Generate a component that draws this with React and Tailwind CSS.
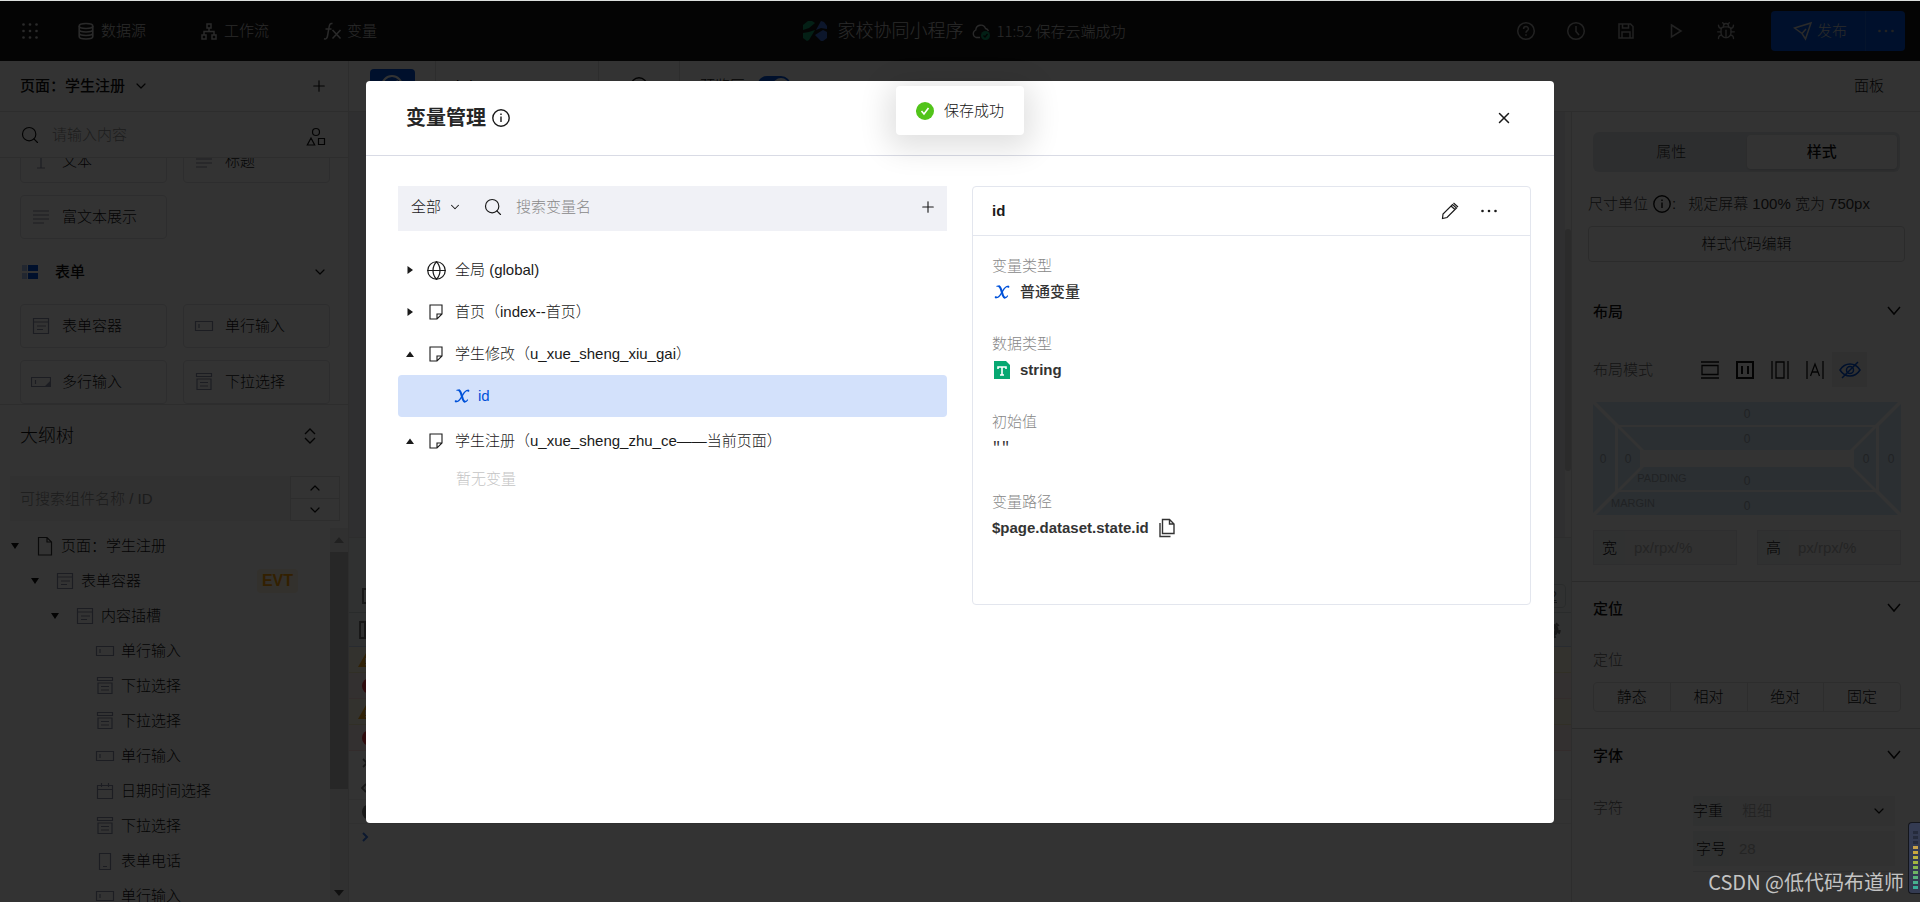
import React, { useState } from 'react';
import { Bug, ChevronDown, ChevronUp, Globe, Plus, Search, X } from 'lucide-react';

const PALETTE_TEXT = [
  { icon: 'text', label: '文本' },
  { icon: 'lines', label: '标题' },
  { icon: 'lines', label: '富文本展示' },
];

const PALETTE_FORM = [
  { icon: 'form', label: '表单容器' },
  { icon: 'input', label: '单行输入' },
  { icon: 'textarea', label: '多行输入' },
  { icon: 'select', label: '下拉选择' },
];

const OUTLINE = [
  { icon: 'page', label: '页面：学生注册', pad: 'pl-[10px]', open: true },
  { icon: 'form', label: '表单容器', pad: 'pl-[30px]', open: true, tag: 'EVT' },
  { icon: 'form', label: '内容插槽', pad: 'pl-[50px]', open: true },
  { icon: 'input', label: '单行输入', pad: 'pl-[70px]' },
  { icon: 'select', label: '下拉选择', pad: 'pl-[70px]' },
  { icon: 'select', label: '下拉选择', pad: 'pl-[70px]' },
  { icon: 'input', label: '单行输入', pad: 'pl-[70px]' },
  { icon: 'date', label: '日期时间选择', pad: 'pl-[70px]' },
  { icon: 'select', label: '下拉选择', pad: 'pl-[70px]' },
  { icon: 'phone', label: '表单电话', pad: 'pl-[70px]' },
  { icon: 'input', label: '单行输入', pad: 'pl-[70px]' },
];

// Component glyphs, all on a 20x20 box.
const GLYPHS = {
  text: <path d="M3 3h14M10 3v14M6 17h8" />,
  lines: <path d="M2 4h16M2 8h16M2 12h16M2 16h11" />,
  form: <path d="M2.5 2.5h15v15h-15zM2.5 6h15M6 10h9M6 13.500h6" />,
  input: <path d="M1.500 5.500h17v9h-17zM5 8v4" />,
  textarea: <><path d="M.5 5.500h19v9H.5zM4.500 8v4" /><path d="M19 10v4h-4z" fill="currentColor" /></>,
  select: <path d="M2.500 1.500h15v3h-15zM3 7h14v10.500H3zM6 10.500h8M6 14h8" />,
  date: <path d="M2.500 4.500h15v13h-15zM2.500 8.500h15M6.500 2v4M13.500 2v4" />,
  phone: <path d="M4.500 2.500h11v16h-11zM8 15.500h4" />,
  page: <path d="M3.500 1.500h8.500l4.500 4.500v13h-13zM12 1.500V6h4.500" />,
};

const Glyph = ({ name, className = 'text-[#8b90a8]' }) => (
  <svg viewBox="0 0 20 20" fill="none" stroke="currentColor" strokeWidth="1.2" className={`w-5 h-5 shrink-0 ${className}`}>
    {GLYPHS[name]}
  </svg>
);

const InfoIcon = ({ className = '' }) => (
  <svg viewBox="0 0 20 20" fill="none" stroke="currentColor" strokeWidth="1.4" className={`w-5 h-5 shrink-0 ${className}`}>
    <circle cx="10" cy="10" r="8.2" />
    <path d="M10 8.500v5.500M10 5.500v1.600" />
  </svg>
);

const VariableIcon = () => (
  <svg viewBox="0 0 16 16" fill="none" stroke="#0052d9" strokeLinecap="round" className="w-4 h-4 shrink-0">
    <path d="M5.300 2.400C7.800 3.500 7.800 12.500 10.600 13.600" strokeWidth="2.200" />
    <path d="M3 2.300c1-.3 1.700-.3 2.300.1M10.600 13.600c1.400.4 2.200-.3 2.900-1.600" strokeWidth="1.200" />
    <path d="M14.300 2.500C11 1.800 9.600 5.800 8 8.200c-1.600 2.500-3 5.900-6.200 5.300" strokeWidth="1.300" />
    <path d="M14.200 2.800h.2M1.700 13.200h.3" strokeWidth="2" />
  </svg>
);

const Dots = ({ className = '' }) => (
  <svg viewBox="0 0 18 18" fill="currentColor" className={`w-[18px] h-[18px] ${className}`}>
    <circle cx="2.500" cy="9" r="1.300" />
    <circle cx="9" cy="9" r="1.300" />
    <circle cx="15.500" cy="9" r="1.300" />
  </svg>
);

const HeaderIcon = ({ label, children }) => (
  <button type="button" aria-label={label} className="w-[50px] h-10 flex items-center justify-center text-[#a8a8a8]">
    <svg viewBox="0 0 20 20" fill="none" stroke="currentColor" strokeWidth="1.5" className="w-5 h-5">
      {children}
    </svg>
  </button>
);

const TopBar = () => (
  <header className="h-[60px] shrink-0 bg-[#181818] text-[#d0d0d0] flex items-center">
    <div className="flex-1 flex items-center">
      <button type="button" aria-label="菜单" className="ml-5">
        <svg viewBox="0 0 20 20" fill="currentColor" className="w-5 h-5">
          {[3.5, 10, 16.5].map((y) => [3.5, 10, 16.5].map((x) => <circle key={`${x}-${y}`} cx={x} cy={y} r="1.300" />))}
        </svg>
      </button>
      <button type="button" className="ml-9 flex items-center gap-[5px]">
        <svg viewBox="0 0 20 20" fill="none" stroke="currentColor" strokeWidth="1.600" className="w-5 h-5">
          <ellipse cx="10" cy="5" rx="6.800" ry="2.500" />
          <path d="M3.200 5v10.500c0 1.400 3 2.500 6.800 2.500s6.800-1.100 6.800-2.500V5M3.200 8.500C3.200 10 6.200 11 10 11s6.800-1 6.800-2.500M3.200 12c0 1.500 3 2.500 6.800 2.500s6.800-1 6.800-2.500" />
        </svg>
        数据源
      </button>
      <button type="button" className="ml-[53px] flex items-center gap-[5px]">
        <svg viewBox="0 0 20 20" fill="none" stroke="currentColor" strokeWidth="1.500" className="w-5 h-5">
          <path d="M8 3h4v4H8zM3 14h4v4H3zM13 14h4v4h-4zM10 7v3.500M5 14v-3.500h10V14" />
        </svg>
        工作流
      </button>
      <button type="button" className="ml-[53px] flex items-center gap-[5px]">
        <svg viewBox="0 0 20 20" fill="none" stroke="currentColor" strokeWidth="1.500" className="w-5 h-5">
          <path d="M10.500 2.500C8 2 7.500 3.500 7 6.500L5.500 15c-.4 2.500-1.500 3.300-3.500 2.800M3.500 8h6M10.500 9l8 8.500M18.500 9l-8 8.500" />
        </svg>
        变量
      </button>
    </div>
    <div className="ml-6 flex items-center">
      <svg viewBox="0 0 24 20" className="w-6 h-5">
        <path d="M0 4 5 0h4l3 2-6 5-6 2zM0 12l6-1 6-2-6 10-2 1-4-3z" fill="#14a06e" />
        <path d="m13 9 5-9 3 1 3 4v3l-6-1zM12 14l8-5 4 2v6l-4 3h-2z" fill="#3f6fd8" />
      </svg>
      <span className="ml-[10px] text-lg">家校协同小程序</span>
      <svg viewBox="0 0 20 20" className="ml-[8px] w-5 h-5" fill="none" stroke="currentColor" strokeWidth="1.300">
        <path d="M9 16.500H5A4 4 0 0 1 4.800 9a5 5 0 0 1 9.700-1.500c1.500.3 2.500 1.200 3 2.500" />
        <circle cx="14.500" cy="14.500" r="4.500" fill="#0a9a68" stroke="none" />
        <path d="m12.500 14.500 1.500 1.500 2.500-3" stroke="#111" />
      </svg>
      <span className="ml-[5px] font-['Noto_Sans_CJK_SC',sans-serif]">11:52 保存云端成功</span>
    </div>
    <div className="flex-1 pr-[15px] flex items-center justify-end">
      <HeaderIcon label="帮助">
        <circle cx="10" cy="10" r="8.300" />
        <path d="M7.600 8c0-3.200 4.800-3.200 4.800 0 0 1.600-2.400 1.700-2.400 3.700M10 13.200v1.500" />
      </HeaderIcon>
      <HeaderIcon label="历史">
        <circle cx="10" cy="10" r="8.300" />
        <path d="M10 5v5.500l3 3.500" />
      </HeaderIcon>
      <HeaderIcon label="保存">
        <path d="M3 3h11.500L17 5.500V17H3zM6.500 3v4h6V3M6 17v-6h8v6" />
      </HeaderIcon>
      <HeaderIcon label="预览">
        <path d="m5.500 4 9.500 6-9.500 6z" />
      </HeaderIcon>
      <button type="button" aria-label="调试" className="w-[50px] h-10 flex items-center justify-center text-[#a8a8a8]">
        <Bug className="w-5 h-5" strokeWidth={1.6} />
      </button>
      <div className="ml-5 h-10 flex rounded bg-[#0052d9] overflow-hidden">
        <button type="button" className="w-[95px] pl-1 flex items-center justify-center gap-1 border-r border-[#1c64dc]">
          <svg viewBox="0 0 20 20" fill="none" stroke="currentColor" strokeWidth="1.500" className="w-5 h-5">
            <path d="M1.500 7 18 2l-5.500 16-3.500-5.500zM9 12.500 13 8" />
          </svg>
          发布
        </button>
        <button type="button" aria-label="更多" className="w-[39px] flex items-center justify-center text-[#a8a8a8]">
          <Dots />
        </button>
      </div>
    </div>
  </header>
);

const PaletteCard = ({ icon, label }) => (
  <button type="button" className="h-11 px-[10px] flex items-center gap-[11px] border border-[#e2e2e4] rounded">
    <Glyph name={icon} />
    {label}
  </button>
);

const LeftPanel = () => (
  <aside className="w-[349px] shrink-0 bg-white border-r border-[#dedede] flex flex-col text-[#111]">
    <div className="h-[51px] shrink-0 px-5 flex items-center justify-between border-b border-[#dedede]">
      <button type="button" className="flex items-center gap-2 font-medium">
        页面：学生注册
        <ChevronDown className="w-4 h-4" strokeWidth={1.8} />
      </button>
      <button type="button" aria-label="新建页面">
        <Plus className="w-[18px] h-[18px]" strokeWidth={1.500} />
      </button>
    </div>
    <label className="h-[46px] shrink-0 px-5 flex items-center border-b border-[#dedede]">
      <Search className="w-5 h-5" strokeWidth={1.400} />
      <input aria-label="搜索组件" placeholder="请输入内容" className="ml-3 flex-1 min-w-0 bg-transparent outline-none placeholder:text-[#909090]" />
      <svg viewBox="0 0 20 20" fill="none" stroke="currentColor" strokeWidth="1.200" className="mt-1 mr-[2px] w-5 h-5">
        <circle cx="10" cy="5" r="3.500" />
        <path d="m5 11-3.700 7h7.400zM12.500 11.500h6v6h-6z" />
      </svg>
    </label>

    <div className="h-[247px] shrink-0 overflow-hidden border-b border-[#dedede]">
      <div className="-mt-[19px] pl-5 pr-[18px]">
        <div className="grid grid-cols-2 gap-x-4 gap-y-3">
          {PALETTE_TEXT.map((c) => <PaletteCard key={c.label} {...c} />)}
        </div>
        <button type="button" className="w-full h-[65px] flex items-center font-medium">
          <svg viewBox="0 0 20 20" className="w-5 h-5">
            <path d="M2 3h5v6H2zM2 11h5v6H2z" fill="#a9c1ee" />
            <path d="M8 3h10v6H8zM8 11h10v6H8z" fill="#0052d9" />
          </svg>
          <span className="ml-[15px] flex-1 text-left">表单</span>
          <ChevronDown className="mr-[2px] w-4 h-4" strokeWidth={1.800} />
        </button>
        <div className="grid grid-cols-2 gap-x-4 gap-y-3">
          {PALETTE_FORM.map((c) => <PaletteCard key={c.label} {...c} />)}
        </div>
      </div>
    </div>

    <div className="h-[71px] shrink-0 pl-5 pr-[28px] pb-[10px] flex items-center justify-between">
      <h2 className="text-lg">大纲树</h2>
      <button type="button" aria-label="展开">
        <svg viewBox="0 0 20 20" fill="none" stroke="currentColor" strokeWidth="1.400" className="w-5 h-5">
          <path d="m5 8 5-5 5 5M5 12l5 5 5-5" />
        </svg>
      </button>
    </div>
    <div className="h-[45px] shrink-0 ml-[10px] mr-2 flex">
      <input aria-label="搜索组件名称" placeholder="可搜索组件名称 / ID" className="flex-1 min-w-0 px-[10px] bg-[#f4f4f4] outline-none placeholder:text-[#8c8c8c]" />
      <div className="w-[50px] flex flex-col border border-[#dedede]">
        <button type="button" aria-label="上一个" className="flex-1 flex items-center justify-center border-b border-[#dedede]">
          <ChevronUp className="w-4 h-4" strokeWidth={1.800} />
        </button>
        <button type="button" aria-label="下一个" className="flex-1 flex items-center justify-center">
          <ChevronDown className="w-4 h-4" strokeWidth={1.800} />
        </button>
      </div>
    </div>
    <div className="mt-[7px] flex-1 min-h-0 flex overflow-hidden">
      <ul className="flex-1">
        {OUTLINE.map((n, i) => (
          <li key={i} className={`h-[35px] flex items-center ${n.pad}`}>
            <span className="w-[25px] text-[#111]">
              {n.open && (
                <svg viewBox="0 0 10 10" fill="currentColor" className="w-[10px] h-[10px]">
                  <path d="M1 2h8L5 8z" />
                </svg>
              )}
            </span>
            <Glyph name={n.icon} className={n.icon === 'page' ? 'text-[#333]' : 'text-[#8b90a8]'} />
            <span className="ml-[6px]">{n.label}</span>
            {n.tag && (
              <span className="ml-auto mr-8 h-6 px-[5px] flex items-center rounded bg-[#fff3e0] text-base font-bold text-[#ffa000]">
                {n.tag}
              </span>
            )}
          </li>
        ))}
      </ul>
      <div className="w-[18px] shrink-0 bg-[#f1f1f1] flex flex-col items-center text-[#505050]">
        <svg viewBox="0 0 10 10" fill="currentColor" className="my-[7px] w-[10px] h-[10px] opacity-50"><path d="M0 8h10L5 2z" /></svg>
        <div className="w-full h-[237px] bg-[#c1c1c1]" />
        <svg viewBox="0 0 10 10" fill="currentColor" className="mt-auto mb-1 w-[10px] h-[10px]"><path d="M0 2h10L5 8z" /></svg>
      </div>
    </div>
  </aside>
);

const Toolbar = () => (
  <div className="h-[51px] shrink-0 bg-white border-b border-[#dedede] flex items-center text-[#111]">
    <div className="w-[87px] h-full flex items-center justify-center border-r border-[#dedede]">
      <button type="button" aria-label="编辑器" className="w-[45px] h-[35px] flex items-center justify-center rounded bg-[#0052d9] text-white">
        <svg viewBox="0 0 24 24" fill="none" stroke="currentColor" strokeWidth="2" className="w-6 h-6">
          <circle cx="12" cy="12" r="10" />
          <path d="m16 8-3 6-5 2 3-6z" />
        </svg>
      </button>
    </div>
    <div className="w-[163px] h-full pl-5 flex items-center border-r border-[#dedede]">iPhone 8 100%</div>
    <div className="w-[81px] h-full flex items-center justify-center border-r border-[#dedede]">
      <InfoIcon />
    </div>
    <span className="ml-5">预览区</span>
    <button type="button" role="switch" aria-checked="true" aria-label="预览区" className="ml-3 w-[34px] h-5 p-[2px] flex justify-end rounded-full bg-[#0052d9]">
      <span className="w-4 h-4 rounded-full bg-white" />
    </button>
    <button type="button" className="ml-auto mr-9">面板</button>
  </div>
);

const WarnRow = () => (
  <div className="h-[26px] pl-[9px] flex items-center bg-[#fffbe6] border-b border-[#f5e9bd]">
    <svg viewBox="0 0 16 16" className="w-4 h-4"><path d="M8 1 16 15H0z" fill="#f2ab26" /><path d="M7.200 6h1.600v5H7.200zM7.200 12h1.600v1.500H7.200z" fill="#fff" /></svg>
  </div>
);

const ErrorRow = () => (
  <div className="h-[26px] pl-[13px] flex items-center bg-[#fff0f0] border-b border-[#fdd]">
    <span className="w-4 h-4 rounded-full bg-[#eb3941]" />
  </div>
);

const Workspace = () => (
  <main className="flex-1 min-w-0 flex flex-col bg-[#ececee]">
    <div className="h-[425px] shrink-0 flex justify-end">
      <div className="w-[6px] pt-[117px] bg-[#f8f8f8]">
        <div className="h-[242px] rounded-full bg-[#d4d4d4]" />
      </div>
    </div>
    <div className="flex-1 min-h-0 bg-white border-t border-[#dedede] text-[#777] overflow-hidden">
      <div className="h-[75px] pt-[41px] px-[5px] flex items-center justify-between bg-[#f1f5f5] border-b border-[#cdd8d8]">
        <span className="ml-2 w-4 h-4 border-2 border-[#777]" />
        <span className="w-10 h-6 pr-2 leading-[22px] text-right border border-[#cdd8d8] rounded-sm underline">2</span>
      </div>
      <div className="h-[34px] px-[10px] flex items-center justify-between bg-[#f1f5f5] border-b border-[#c8d4ee]">
        <svg viewBox="0 0 18 18" fill="none" stroke="currentColor" strokeWidth="2" className="w-[18px] h-[18px]"><path d="M1 1h16v16H1zM6 1v16" /></svg>
        <svg viewBox="0 0 18 18" fill="none" stroke="currentColor" className="w-[18px] h-[18px]">
          <circle cx="9" cy="9" r="4.500" strokeWidth="4" />
          <circle cx="9" cy="9" r="7.500" strokeWidth="2.500" strokeDasharray="3.900 3.900" />
        </svg>
      </div>
      <WarnRow />
      <ErrorRow />
      <WarnRow />
      <ErrorRow />
      <div className="h-[49px] pl-[12px] border-b border-[#eee]">
        <svg viewBox="0 0 8 50" fill="none" stroke="currentColor" strokeWidth="1.800" className="w-2 h-[50px]">
          <path d="m2 8 4 4-4 4M5 33l-4 4 4 4" />
        </svg>
      </div>
      <div className="h-6 pl-[13px] flex items-center border-b border-[#eee]">
        <span className="w-4 h-4 rounded-full bg-[#777]" />
      </div>
      <svg viewBox="0 0 8 10" fill="none" stroke="#3d7be8" strokeWidth="2" className="mt-2 ml-[12px] w-2 h-[10px]">
        <path d="m2 1 4 4-4 4" />
      </svg>
    </div>
  </main>
);

const SectionTitle = ({ children }) => (
  <button type="button" className="w-full h-[54px] flex items-center justify-between font-medium">
    {children}
    <svg viewBox="0 0 14 16" fill="none" stroke="currentColor" strokeWidth="1.500" className="w-[14px] h-4">
      <path d="m1 3 6 7 6-7" />
    </svg>
  </button>
);

const BoxModel = () => (
  <svg viewBox="0 0 308 113" className="mt-[15px] w-full" fill="#d6e9f8" fontSize="12">
    <path d="M3 0h302l-23 23H26zM3 113h302l-23-23H26zM0 2l22 22v65L0 111zM308 2l-22 22v65l22 22z" />
    <path d="M28 25h252l-23 23H51zM28 88h252l-23-23H51zM25 26l22 22v17L25 87zM283 26l-22 22v17l22 22z" />
    <g fill="#a0abb4" fontWeight="400" textAnchor="middle">
      <text x="154" y="16">0</text>
      <text x="154" y="41">0</text>
      <text x="154" y="83">0</text>
      <text x="154" y="108">0</text>
      <text x="10" y="61">0</text>
      <text x="35" y="61">0</text>
      <text x="273" y="61">0</text>
      <text x="298" y="61">0</text>
      <text x="69" y="80" fontSize="11">PADDING</text>
      <text x="40" y="105" fontSize="11">MARGIN</text>
    </g>
  </svg>
);

const LAYOUT_MODES = [
  { name: '块级', d: 'M1 2h18M1 18h18M2 5.500h16v9H2z' },
  { name: '弹性', d: 'M2 2h16v16H2zM7 6v8M13 6v8', bold: true },
  { name: '行内块', d: 'M2 1v18M18 1v18M6 2h8v16H6z' },
  { name: '行内', d: 'M2 1v18M18 1v18M5.500 16 10 4l4.500 12M7 12h6' },
];

const SizeInput = ({ label }) => (
  <label className="h-[35px] flex border border-[#e4e6ea]">
    <span className="w-[31px] shrink-0 flex items-center justify-center bg-[#f0f5f5]">{label}</span>
    <input placeholder="px/rpx/%" className="flex-1 min-w-0 px-[9px] bg-[#f2f2f2] outline-none placeholder:text-[#b4b4b4]" />
  </label>
);

const StylePanel = () => (
  <aside className="w-[349px] shrink-0 bg-white border-l border-[#dedede] text-[#111] overflow-hidden">
    <div className="mt-5 ml-[21px] mr-5 h-10 p-[3px] flex rounded-md bg-[#e2e6ea]">
      <button type="button" className="flex-1 text-[#333]">属性</button>
      <button type="button" className="flex-1 rounded bg-white font-medium shadow-sm">样式</button>
    </div>
    <div className="ml-4 mt-5 h-6 flex items-center text-[#333]">
      <span className="text-[#444]">尺寸单位</span>
      <InfoIcon className="ml-1 text-[#111]" />
      <span>:</span>
      <span className="ml-3">规定屏幕 100% 宽为 750px</span>
    </div>
    <button type="button" className="ml-4 mt-[10px] w-[317px] h-9 border border-[#d5d5d5] rounded-sm text-[#222]">样式代码编辑</button>

    <section className="pl-[21px] pr-[19px] pt-[23px] pb-4 border-b border-[#d2d2d2]">
      <SectionTitle>布局</SectionTitle>
      <div className="mt-[13px] h-[35px] flex items-center">
        <span className="w-[99px] text-[#666]">布局模式</span>
        {LAYOUT_MODES.map((m) => (
          <button key={m.name} type="button" aria-label={m.name} className="w-[35px] flex justify-center">
            <svg viewBox="0 0 20 20" fill="none" stroke="currentColor" strokeWidth={m.bold ? 2 : 1.3} className="w-5 h-5"><path d={m.d} /></svg>
          </button>
        ))}
        <button type="button" aria-label="隐藏" className="w-[35px] h-[35px] flex items-center justify-center bg-[#f1f1f1] text-[#0052d9]">
          <svg viewBox="0 0 22 20" fill="none" stroke="currentColor" strokeWidth="1.500" className="w-[22px] h-5">
            <path d="M1 10c5-8 15-8 20 0-5 8-15 8-20 0zM3 18 19 2" />
            <circle cx="11" cy="10" r="3.500" />
          </svg>
        </button>
      </div>
      <BoxModel />
      <div className="mt-[15px] grid grid-cols-2 gap-5">
        <SizeInput label="宽" />
        <SizeInput label="高" />
      </div>
    </section>

    <section className="pl-[21px] pr-[19px] pb-4 border-b border-[#d2d2d2]">
      <SectionTitle>定位</SectionTitle>
      <div className="mt-3 h-6 text-[#666]">定位</div>
      <div className="mt-[10px] h-[30px] flex border border-[#e2e2e2] rounded">
        {['静态', '相对', '绝对', '固定'].map((p) => (
          <button key={p} type="button" className="flex-1 border-r border-[#e2e2e2] last:border-r-0">{p}</button>
        ))}
      </div>
    </section>

    <section className="pl-[21px] pr-[19px]">
      <SectionTitle>字体</SectionTitle>
      <div className="mt-[13px] pr-[6px] flex">
        <span className="w-[100px] shrink-0 text-[#666]">字符</span>
        <div className="flex-1 min-w-0 flex flex-col gap-[5px]">
          <label className="h-[30px] flex items-center bg-[#f2f2f2]">
            <span className="w-9 h-full shrink-0 flex items-center bg-[#f0f5f5] rounded-l">字重</span>
            <select className="flex-1 min-w-0 h-full pl-[13px] appearance-none bg-transparent text-[#a8a8a8] outline-none">
              <option>粗细</option>
            </select>
            <ChevronDown className="mr-2 w-4 h-4" strokeWidth={1.800} />
          </label>
          <label className="h-[35px] flex items-center bg-[#f2f2f2]">
            <span className="w-9 h-full shrink-0 flex items-center justify-center bg-[#f0f5f5]">字号</span>
            <input placeholder="28" className="flex-1 min-w-0 pl-[10px] bg-transparent outline-none placeholder:text-[#b4b4b4]" />
          </label>
          <div className="h-[35px] border-t border-[#e4e6ea]" />
        </div>
      </div>
    </section>
  </aside>
);

const NodeRow = ({ open, icon, children, onClick }) => (
  <button type="button" onClick={onClick} className="w-full h-[42px] pl-[7px] flex items-center text-left">
    <svg viewBox="0 0 10 10" fill="currentColor" className="w-[10px] h-[10px]">
      {open ? <path d="M1 8h8L5 2.500z" /> : <path d="M2.500 1v8L8 5z" />}
    </svg>
    <span className="ml-[11px] w-5 h-5 flex items-center justify-center">{icon}</span>
    <span className="ml-[9px]">{children}</span>
  </button>
);

const GlobeIcon = () => <Globe className="w-[21px] h-[21px] shrink-0" strokeWidth={1.400} />;

const NoteIcon = () => (
  <svg viewBox="0 0 16 16" fill="none" stroke="currentColor" strokeWidth="1.100" className="w-4 h-4">
    <path d="M2 1h12v9l-5 5H2zM14 10H9v5" />
  </svg>
);

const VariableTree = () => {
  const [selected, setSelected] = useState('id');
  return (
    <div>
      <div className="h-[45px] pl-[13px] pr-[10px] pb-1 flex items-center bg-[#f0f1f6]">
        <label className="relative flex items-center">
          <select aria-label="范围" className="w-[50px] appearance-none bg-transparent outline-none">
            <option>全部</option>
          </select>
          <ChevronDown className="absolute -right-px w-[14px] h-[14px] pointer-events-none" strokeWidth={1.800} />
        </label>
        <Search className="ml-[22px] w-5 h-5" strokeWidth={1.400} />
        <input aria-label="搜索变量名" placeholder="搜索变量名" className="ml-[13px] flex-1 min-w-0 bg-transparent outline-none placeholder:text-[#888]" />
        <button type="button" aria-label="新建变量">
          <Plus className="w-[18px] h-[18px]" strokeWidth={1.500} />
        </button>
      </div>
      <div className="pt-[18px]">
        <NodeRow icon={<GlobeIcon />}>全局 (global)</NodeRow>
        <NodeRow icon={<NoteIcon />}>首页（index--首页）</NodeRow>
        <NodeRow open icon={<NoteIcon />}>学生修改（u_xue_sheng_xiu_gai）</NodeRow>
        <button
          type="button"
          onClick={() => setSelected('id')}
          className={`w-full h-[42px] pl-14 flex items-center gap-2 rounded text-[#0052d9] ${selected === 'id' ? 'bg-[#d3e1fb]' : ''}`}
        >
          <VariableIcon />
          id
        </button>
        <div className="pt-[3px]">
          <NodeRow open icon={<NoteIcon />}>学生注册（u_xue_sheng_zhu_ce——当前页面）</NodeRow>
          <p className="pl-[58px] leading-[34px] text-[#c4c4c4]">暂无变量</p>
        </div>
      </div>
    </div>
  );
};

const Field = ({ label, children }) => (
  <div className="mb-[26px]">
    <dt className="h-6 flex items-center text-[#888]">{label}</dt>
    <dd className="min-h-7 flex items-center font-bold text-[#333]">{children}</dd>
  </div>
);

const VariableDetail = () => (
  <div className="h-[419px] border border-[#e3e6ee] rounded">
    <div className="h-[49px] pl-[19px] pr-8 flex items-center border-b border-[#e3e6ee]">
      <h3 className="flex-1 font-bold">id</h3>
      <button type="button" aria-label="编辑">
        <svg viewBox="0 0 20 20" fill="none" stroke="currentColor" strokeWidth="1.200" className="w-5 h-5">
          <path d="M2.500 17.500 3 13 12.500 3.500l4 3.500L7 16.500zM11 5l4 3.500M13.500 2l4.500 4" />
        </svg>
      </button>
      <button type="button" aria-label="更多" className="ml-5">
        <Dots />
      </button>
    </div>
    <dl className="pt-[18px] pl-[19px]">
      <Field label="变量类型">
        <span className="w-7 pl-[2px]"><VariableIcon /></span>
        <span className="font-medium">普通变量</span>
      </Field>
      <Field label="数据类型">
        <span className="w-7 pl-[2px]">
          <svg viewBox="0 0 16 18" className="w-4 h-[18px]">
            <path d="M0 0h12l4 4v14H0z" fill="#07a872" />
            <path d="M4 8V6h8v2M8 6v8M6 14h4" fill="none" stroke="#fff" strokeWidth="1.600" />
          </svg>
        </span>
        string
      </Field>
      <Field label="初始值"><span className="leading-[30px] font-mono font-normal">""</span></Field>
      <Field label="变量路径">
        $page.dataset.state.id
        <button type="button" aria-label="复制" className="ml-2">
          <svg viewBox="0 0 20 20" fill="none" stroke="currentColor" strokeWidth="1.400" className="w-5 h-5">
            <path d="M5.500 1.500h7L17 6v9.500H5.500zM12.500 1.500V6H17M3 5v13.500h10.500" />
          </svg>
        </button>
      </Field>
    </dl>
  </div>
);

const VariableModal = () => (
  <div role="dialog" aria-label="变量管理" className="w-full max-w-[1188px] min-h-[742px] bg-white rounded text-[#1a1a1a]">
    <div className="h-[75px] pl-10 pr-[41px] flex items-center border-b border-[#d9dbe5]">
      <h1 className="text-xl font-bold text-[#262626]">变量管理</h1>
      <InfoIcon className="ml-[5px]" />
      <button type="button" aria-label="关闭" className="ml-auto">
        <X className="w-[18px] h-[18px]" strokeWidth={2} />
      </button>
    </div>
    <div className="pt-[30px] pl-8 pr-[23px] grid grid-cols-[55fr_56fr] gap-[25px]">
      <VariableTree />
      <VariableDetail />
    </div>
  </div>
);

const Toast = () => (
  <div role="status" className="absolute top-[85px] left-1/2 -translate-x-1/2 h-[49px] px-5 flex items-center gap-[10px] rounded-sm bg-white text-[#111] shadow-[0_6px_30px_8px_rgba(0,0,0,0.12)]">
    <svg viewBox="0 0 18 18" className="w-[18px] h-[18px]">
      <circle cx="9" cy="9" r="9" fill="#52c41a" />
      <path d="m5.500 9 2.500 3 4.500-6" fill="none" stroke="#fff" strokeWidth="1.600" />
    </svg>
    保存成功
  </div>
);

const METER = ['bg-[#252b3c]', 'bg-[#252b3c]', 'bg-[#252b3c]', 'bg-[#c8a24a]', 'bg-[#c8a83e]', 'bg-[#b9b13e]', 'bg-[#a3b540]', 'bg-[#86b64e]', 'bg-[#6fb563]', 'bg-[#58b37c]', 'bg-[#48b18e]', 'bg-[#3aae9a]'];

export default function App() {
  return (
    <div className="h-screen min-h-[600px] relative flex flex-col overflow-hidden border-t border-[#dcdfdd] bg-white text-[15px] leading-6 font-light font-['Liberation_Sans','Noto_Sans_CJK_SC',sans-serif]">
      <TopBar />
      <div className="flex-1 min-h-0 flex">
        <LeftPanel />
        <div className="flex-1 min-w-0 flex flex-col">
          <Toolbar />
          <div className="flex-1 min-h-0 flex">
            <Workspace />
            <StylePanel />
          </div>
        </div>
      </div>
      <div className="absolute inset-0 pt-20 flex items-start justify-center bg-black/80">
        <VariableModal />
      </div>
      <Toast />
      <p className="absolute right-4 bottom-1 text-xl leading-8 font-normal text-[#c4c4c4] font-['Noto_Sans_CJK_SC',sans-serif]">CSDN @低代码布道师</p>
      <div className="absolute right-0 bottom-2 w-3 h-[72px] pt-2 pl-1 pr-[2px] flex flex-col gap-[2px] rounded-l border border-r-0 border-[#14161c] bg-[#343b52]">
        {METER.map((c, i) => <span key={i} className={`h-[3px] ${c}`} />)}
      </div>
    </div>
  );
}
